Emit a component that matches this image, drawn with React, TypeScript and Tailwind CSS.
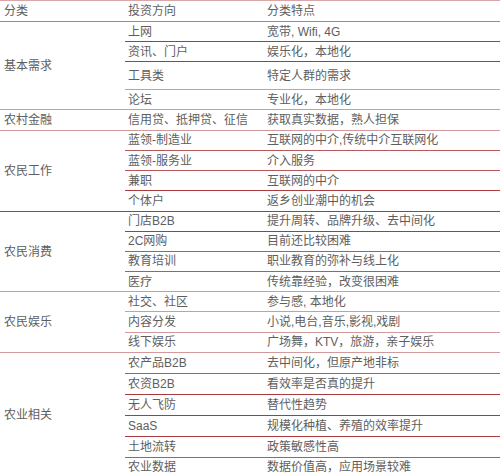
import React from 'react';

type Row = { dir: string; feat: string; h: string; line: string };
type Group = { name: string; line: string; rows: Row[] };

const DARK = 'border-[#a93b3d]';
const RED = 'border-[#b8585a]';
const PINK = 'border-[#d29a9b]';
const NONE = 'border-transparent';

const groups: Group[] = [
  {
    name: '基本需求',
    line: PINK,
    rows: [
      { dir: '上网', feat: '宽带, Wifi, 4G', h: 'h-[20px]', line: DARK },
      { dir: '资讯、门户', feat: '娱乐化，本地化', h: 'h-[20px]', line: DARK },
      { dir: '工具类', feat: '特定人群的需求', h: 'h-[28px]', line: PINK },
      { dir: '论坛', feat: '专业化，本地化', h: 'h-[20px]', line: PINK },
    ],
  },
  {
    name: '农村金融',
    line: PINK,
    rows: [{ dir: '信用贷、抵押贷、征信', feat: '获取真实数据，熟人担保', h: 'h-[20.5px]', line: PINK }],
  },
  {
    name: '农民工作',
    line: DARK,
    rows: [
      { dir: '蓝领-制造业', feat: '互联网的中介,传统中介互联网化', h: 'h-[20.5px]', line: RED },
      { dir: '蓝领-服务业', feat: '介入服务', h: 'h-[20.2px]', line: RED },
      { dir: '兼职', feat: '互联网的中介', h: 'h-[20.2px]', line: DARK },
      { dir: '个体户', feat: '返乡创业潮中的机会', h: 'h-[20.5px]', line: DARK },
    ],
  },
  {
    name: '农民消费',
    line: PINK,
    rows: [
      { dir: '门店B2B', feat: '提升周转、品牌升级、去中间化', h: 'h-[20.2px]', line: DARK },
      { dir: '2C网购', feat: '目前还比较困难', h: 'h-[19.8px]', line: RED },
      { dir: '教育培训', feat: '职业教育的弥补与线上化', h: 'h-[20px]', line: RED },
      { dir: '医疗', feat: '传统靠经验，改变很困难', h: 'h-[20.4px]', line: PINK },
    ],
  },
  {
    name: '农民娱乐',
    line: PINK,
    rows: [
      { dir: '社交、社区', feat: '参与感, 本地化', h: 'h-[20px]', line: PINK },
      { dir: '内容分发', feat: '小说,电台,音乐,影视,戏剧', h: 'h-[20.3px]', line: PINK },
      { dir: '线下娱乐', feat: '广场舞，KTV，旅游，亲子娱乐', h: 'h-[20.7px]', line: PINK },
    ],
  },
  {
    name: '农业相关',
    line: NONE,
    rows: [
      { dir: '农产品B2B', feat: '去中间化，但原产地非标', h: 'h-[21px]', line: RED },
      { dir: '农资B2B', feat: '看效率是否真的提升', h: 'h-[20.6px]', line: DARK },
      { dir: '无人飞防', feat: '替代性趋势', h: 'h-[20.7px]', line: DARK },
      { dir: 'SaaS', feat: '规模化种植、养殖的效率提升', h: 'h-[21px]', line: DARK },
      { dir: '土地流转', feat: '政策敏感性高', h: 'h-[21px]', line: RED },
      { dir: '农业数据', feat: '数据价值高，应用场景较难', h: 'h-[20px]', line: NONE },
    ],
  },
];

const App: React.FC = () => {
  return (
    <div className="w-[500px] h-[476px] overflow-hidden bg-white text-[12px] leading-none text-[#5e5e5e] font-['Liberation_Sans','Noto_Sans_CJK_SC',sans-serif]">
      <div className="flex h-[22px] border-t border-b border-t-[#d9a6a7] border-b-[#c47a7b]">
        <div className="w-[125px] flex items-center pl-[4px]">分类</div>
        <div className="w-[139px] flex items-center pl-[3px]">投资方向</div>
        <div className="flex-1 flex items-center pl-[3px]">分类特点</div>
      </div>
      {groups.map((g) => (
        <div key={g.name} className="flex">
          <div className={`w-[125px] flex items-center pl-[4px] border-b ${g.line}`}>{g.name}</div>
          <div className="flex-1 flex flex-col">
            {g.rows.map((r, i) => {
              const last = i === g.rows.length - 1;
              return (
                <div key={r.dir} className={`flex ${r.h} ${last ? `border-b ${g.line}` : `border-b ${r.line}`}`}>
                  <div className="w-[139px] flex items-center pl-[3px] whitespace-nowrap">{r.dir}</div>
                  <div className="flex-1 flex items-center pl-[3px] whitespace-nowrap">{r.feat}</div>
                </div>
              );
            })}
          </div>
        </div>
      ))}
    </div>
  );
};

export default App;
